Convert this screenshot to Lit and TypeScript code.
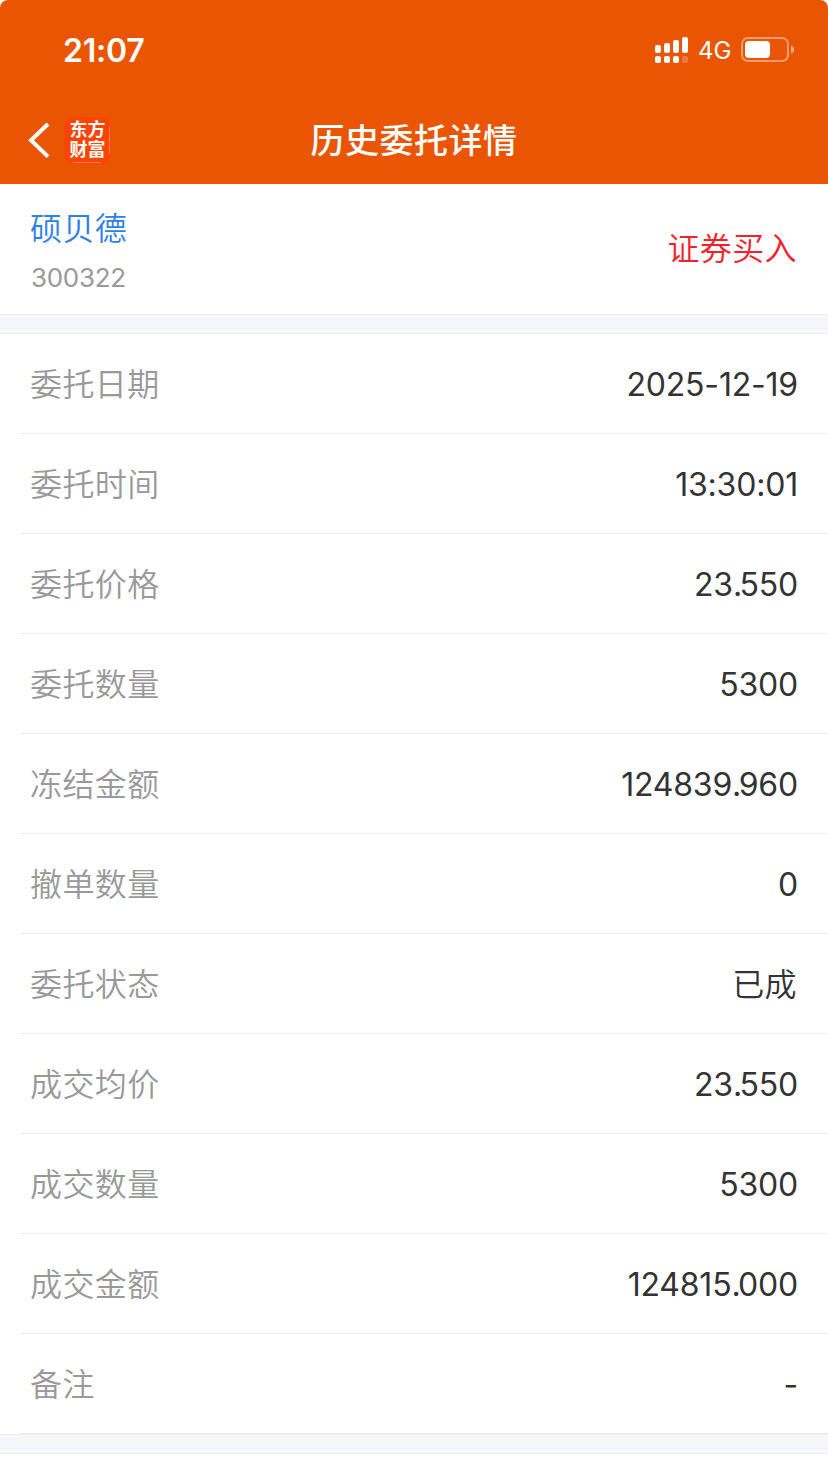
import { LitElement, html, css } from "lit";
import { customElement } from "lit/decorators.js";

const ROWS: [string, string][] = [
  ["委托日期", "2025-12-19"],
  ["委托时间", "13:30:01"],
  ["委托价格", "23.550"],
  ["委托数量", "5300"],
  ["冻结金额", "124839.960"],
  ["撤单数量", "0"],
  ["委托状态", "已成"],
  ["成交均价", "23.550"],
  ["成交数量", "5300"],
  ["成交金额", "124815.000"],
  ["备注", "-"],
];

@customElement("status-bar")
class StatusBar extends LitElement {
  static styles = css`
    :host { display: flex; justify-content: space-between; align-items: center; height: 100px; padding: 0 34px 0 63px; box-sizing: border-box; color: #fff; }
    .time { font-size: 32px; font-weight: 600; line-height: 40px; padding-top: 1px; letter-spacing: -0.2px; }
    .right { display: flex; align-items: center; }
    .signal { margin-right: 10px; display: block; }
    .net { font-size: 24px; line-height: 30px; font-weight: 400; width: 43px; padding-top: 2px; }
    .battery { display: block; margin-bottom: 1px; }
  `;
  render() {
    return html`
      <span class="time">21:07</span>
      <div class="right">
        <svg class="signal" width="33" height="26" viewBox="0 0 33 26" fill="#fff">
          <rect x="0" y="8" width="6" height="8" rx="2" />
          <rect x="9" y="6" width="6" height="10" rx="2" />
          <rect x="18" y="3" width="6" height="13" rx="2" />
          <rect x="27" y="0" width="6" height="16" rx="2" />
          <rect x="0" y="19" width="6" height="7" rx="2" />
          <rect x="9" y="19" width="6" height="7" rx="2" />
          <rect x="18" y="19" width="6" height="7" rx="2" />
          <rect x="27" y="19" width="6" height="7" rx="2" opacity=".22" />
        </svg>
        <span class="net">4G</span>
        <svg class="battery" width="53" height="25" viewBox="0 0 53 25">
          <rect x="1" y="1" width="46" height="23" rx="6" fill="none" stroke="#fff" stroke-opacity=".42" stroke-width="2" />
          <rect x="4" y="4" width="25" height="17" rx="4" fill="#fff" />
          <path d="M50 8.5Q53 9.5 53 12.5T50 16.5Z" fill="#fff" fill-opacity=".5" />
        </svg>
      </div>
    `;
  }
}

@customElement("nav-bar")
class NavBar extends LitElement {
  static styles = css`
    :host { display: grid; grid-template-columns: 1fr auto 1fr; align-items: center; height: 84px; padding: 0 28px 4px; box-sizing: border-box; color: #fff; }
    .left { display: flex; align-items: center; }
    .back { display: block; margin-right: 14px; }
    .logo { display: grid; align-content: center; justify-items: center; width: 47px; height: 47px; border-radius: 10px; background: #ff4400; font-size: 18px; line-height: 20px; font-weight: 700; box-sizing: border-box; }
    .shine { display: block; width: 47px; height: 47px; grid-area: 1 / 1; }
    .words { grid-area: 1 / 1; display: flex; flex-direction: column; align-self: center; padding-bottom: 1px; }
    .title { font-size: 34px; line-height: 40px; font-weight: 500; letter-spacing: 0.5px; padding-top: 2px; }
  `;
  render() {
    return html`
      <div class="left">
        <svg class="back" width="22" height="36" viewBox="0 0 22 36" fill="none" stroke="#fff" stroke-width="4">
          <path d="M20 2L3 18.3L20 34.6" />
        </svg>
        <div class="logo">
          <svg class="shine" viewBox="0 0 47 47" stroke="#fff" stroke-opacity=".35" stroke-width="1">
            <path d="M45.5 9V37M9 45.5H37" />
          </svg>
          <div class="words"><span>东方</span><span>财富</span></div>
        </div>
      </div>
      <span class="title">历史委托详情</span>
    `;
  }
}

@customElement("app-root")
class AppRoot extends LitElement {
  static styles = css`
    :host { display: block; width: 828px; height: 1460px; overflow: hidden; background: #fff; font-family: Inter, "Noto Sans CJK SC", sans-serif; }
    .header { height: 184px; background: #ea5504; border-radius: 8px 8px 0 0; }
    .stock { display: flex; justify-content: space-between; align-items: center; height: 130px; padding: 0 31px 1px 30px; box-sizing: border-box; }
    .name { font-size: 32px; line-height: 48px; color: #2f80e8; letter-spacing: 0.4px; font-weight: 350; padding-top: 1px; }
    .code { font-size: 26px; line-height: 32px; color: #999; margin-top: 9px; letter-spacing: -0.3px; padding-left: 1px; }
    .side { font-size: 32px; line-height: 48px; color: #f8202a; letter-spacing: 0.4px; font-weight: 350; }
    .gap { height: 20px; box-sizing: border-box; background: #f5f7fa; border-top: 1px solid #ebedef; border-bottom: 1px solid #ebedef; }
    .row { display: flex; justify-content: space-between; align-items: center; height: 100px; margin-left: 20px; padding: 2px 30px 0 10px; box-sizing: border-box; border-bottom: 1px solid #ebedef; font-size: 32px; line-height: 48px; }
    .label { color: #999; letter-spacing: 0.4px; font-weight: 350; }
    .value { color: #333; letter-spacing: -0.2px; font-weight: 370; }
    .word { color: #333; letter-spacing: 0.4px; font-weight: 350; padding-right: 1px; }
    .dot { letter-spacing: -2.6px; }
  `;
  private value(v: string) {
    if (!/^[\d.:-]+$/.test(v)) return html`<span class="word">${v}</span>`;
    const [whole, frac] = v.split(".");
    return frac === undefined
      ? html`<span class="value">${v}</span>`
      : html`<span class="value">${whole}<span class="dot">.</span>${frac}</span>`;
  }
  render() {
    return html`
      <div class="header"><status-bar></status-bar><nav-bar></nav-bar></div>
      <div class="stock">
        <div>
          <div class="name">硕贝德</div>
          <div class="code">300322</div>
        </div>
        <div class="side">证券买入</div>
      </div>
      <div class="gap"></div>
      ${ROWS.map(([l, v]) => html`<div class="row"><span class="label">${l}</span>${this.value(v)}</div>`)}
      <div class="gap"></div>
    `;
  }
}
